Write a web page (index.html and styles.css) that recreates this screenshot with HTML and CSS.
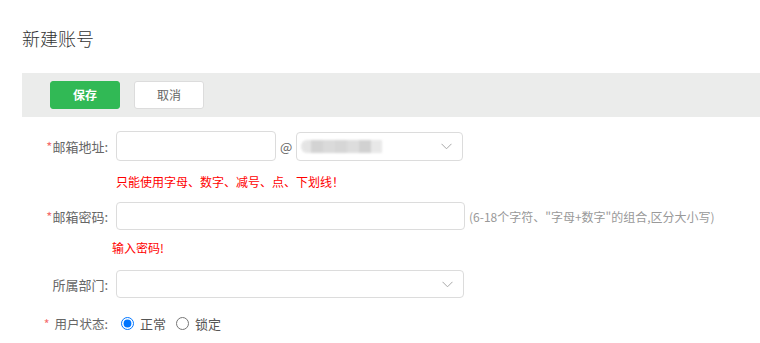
FILE: index.html
```html
<!DOCTYPE html>
<html lang="zh-CN">
<head>
<meta charset="utf-8">
<title>新建账号</title>
<link rel="stylesheet" href="styles.css">
</head>
<body>
<div class="page">
  <h1 class="title">新建账号</h1>
  <div class="toolbar">
    <button class="btn btn-save" type="button">保存</button>
    <button class="btn btn-cancel" type="button">取消</button>
  </div>
  <div class="form">
    <div class="row row-email">
      <label class="label"><span class="req">*</span>邮箱地址:</label>
      <input class="input input-user" type="text">
      <span class="at">@</span>
      <div class="select select-domain">
        <div class="blur">
          <span class="b1"></span><span class="b2"></span><span class="b3"></span><span class="b4"></span><span class="b5"></span><span class="b6"></span><span class="b7"></span>
        </div>
        <svg class="chev" width="11" height="7" viewBox="0 0 11 7"><polyline points="0.5,0.8 5.5,5.8 10.5,0.8" fill="none" stroke="#a8a8a8" stroke-width="1"/></svg>
      </div>
    </div>
    <div class="err err-email">只能使用字母、数字、减号、点、下划线！</div>
    <div class="row row-pwd">
      <label class="label"><span class="req">*</span>邮箱密码:</label>
      <input class="input input-pwd" type="password">
      <span class="hint">(6-18个字符、"字母+数字"的组合,区分大小写)</span>
    </div>
    <div class="err err-pwd">输入密码!</div>
    <div class="row row-dept">
      <label class="label">所属部门:</label>
      <div class="select select-dept">
        <svg class="chev" width="11" height="7" viewBox="0 0 11 7"><polyline points="0.5,0.8 5.5,5.8 10.5,0.8" fill="none" stroke="#a8a8a8" stroke-width="1"/></svg>
      </div>
    </div>
    <div class="row row-status">
      <label class="label label-sm"><span class="req req-sp">*</span>用户状态:</label>
      <div class="radios">
        <label class="radio"><input type="radio" name="st" checked><span>正常</span></label>
        <label class="radio"><input type="radio" name="st"><span>锁定</span></label>
      </div>
    </div>
  </div>
</div>
</body>
</html>
```

FILE: styles.css
```css
* { box-sizing: border-box; }
html, body { margin: 0; padding: 0; background: #fff; }
body {
  font-family: "Noto Sans CJK SC", "Noto Sans", "Liberation Sans", sans-serif;
  color: #333;
  width: 760px;
  height: 343px;
  overflow: hidden;
}
.page { padding: 26px 0 0 22px; }
.title {
  margin: 0;
  font-size: 18px;
  font-weight: 300;
  line-height: 24px;
  color: #333;
}
.toolbar {
  margin-top: 23px;
  height: 44px;
  background: #ebeceb;
  padding: 8px 28px;
  display: flex;
  gap: 14px;
}
.btn {
  width: 70px;
  height: 28px;
  border-radius: 3px;
  font-family: inherit;
  font-size: 12px;
  line-height: 26px;
  padding: 0;
  cursor: pointer;
}
.btn-save {
  background: #31b955;
  border: 1px solid #31b955;
  color: #fff;
  font-weight: 700;
}
.btn-cancel {
  background: #fff;
  border: 1px solid #dcdcdc;
  color: #666;
}
.form { margin-top: 14px; }
.row { display: flex; align-items: center; }
.label {
  width: 94px;
  padding-right: 8px;
  text-align: right;
  font-size: 13px;
  color: #666;
  white-space: nowrap;
  flex: none;
}
.label-sm { font-size: 12.5px; }
.req { color: #f56c6c; }
.req-sp { margin-right: 5px; }
.input {
  height: 30px;
  border: 1px solid #dcdcdc;
  border-radius: 4px;
  background: #fff;
  font-family: inherit;
  outline: none;
  padding: 0 8px;
}
.input-user { width: 160px; }
.at {
  font-size: 13px;
  color: #666;
  margin: 0 4px 0 4px;
}
.select {
  border: 1px solid #dcdcdc;
  border-radius: 4px;
  background: #fff;
  display: flex;
  align-items: center;
  justify-content: space-between;
  padding: 0 10px 0 4px;
}
.select-domain { width: 167px; height: 29px; margin-top: 1px; }
.select-dept { width: 348px; height: 28px; justify-content: flex-end; }
.blur {
  display: flex;
  height: 13px;
  filter: blur(0.8px);
  opacity: 0.9;
}
.blur span { display: block; height: 13px; width: 12px; }
.blur .b1 { background: #e2e2e2; width: 10px; border-radius: 6px 0 0 6px; }
.blur .b2 { background: #cfcfcf; }
.blur .b3 { background: #d6d6d6; }
.blur .b4 { background: #d2d2d2; }
.blur .b5 { background: #dadada; }
.blur .b6 { background: #cdcdcd; }
.blur .b7 { background: #e6e6e6; width: 11px; }
.chev { display: block; flex: none; }
.err {
  color: #f00;
  font-size: 12px;
  height: 41px;
  line-height: 41px;
}
.err-email { padding-left: 94px; }
.err-pwd { padding-left: 90px; height: 40px; line-height: 36px; }
.input-pwd { width: 349px; height: 28px; }
.hint {
  font-size: 12px;
  color: #999;
  margin-left: 4px;
  white-space: nowrap;
}
.row-status { margin-top: 13px; height: 24px; }
.radios { display: flex; align-items: center; font-size: 13px; color: #555; }
.radio { display: flex; align-items: center; margin-right: 10px; }
.radio input { margin: 0 6px 0 5px; width: 13px; height: 13px; }
.radio + .radio input { margin-left: 0; }
```
